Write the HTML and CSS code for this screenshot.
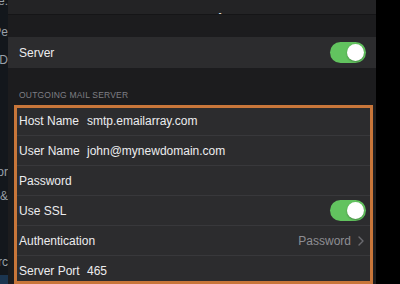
FILE: index.html
```html
<!DOCTYPE html>
<html>
<head>
<meta charset="utf-8">
<link rel="stylesheet" href="styles.css">
</head>
<body>
<div class="screen">
  <div class="behind">
    <div class="frag f1">Name:</div>
    <div class="frag f2">Pe</div>
    <div class="frag f3">ID</div>
    <div class="frag f4">or</div>
    <div class="frag f5">&amp;</div>
    <div class="frag f6">erc</div>
    <div class="bluebar"></div>
  </div>
  <div class="sheet">
    <div class="topbar"><span class="title">SMTP · Settings</span></div>
    <div class="spacer"></div>
    <div class="row solo">
      <span class="label">Server</span>
      <span class="toggle"><span class="knob"></span></span>
    </div>
    <div class="section-head">OUTGOING MAIL SERVER</div>
    <div class="box">
      <div class="row r-first"><span class="label">Host Name</span><span class="value">smtp.emailarray.com</span></div>
      <div class="row"><span class="label">User Name</span><span class="value">john@mynewdomain.com</span></div>
      <div class="row"><span class="label">Password</span></div>
      <div class="row"><span class="label">Use SSL</span><span class="toggle"><span class="knob"></span></span></div>
      <div class="row"><span class="label">Authentication</span><span class="detail">Password<svg class="chev" width="6" height="10" viewBox="0 0 6 10"><path d="M1 1l4 4-4 4" fill="none" stroke="#6b6b70" stroke-width="1.4" stroke-linecap="round" stroke-linejoin="round"/></svg></span></div>
      <div class="row r-last"><span class="label">Server Port</span><span class="value">465</span></div>
    </div>
  </div>
  <div class="right"></div>
</div>
</body>
</html>
```
FILE: styles.css
```css
html, body {
  margin: 0;
  padding: 0;
  background: #000;
}
.screen {
  width: 400px;
  height: 284px;
  display: flex;
  overflow: hidden;
  font-family: "Liberation Sans", Arial, sans-serif;
  color: #ececee;
}
.behind {
  width: 8px;
  flex: none;
  background: #13171c;
  position: relative;
  overflow: hidden;
}
.frag {
  position: absolute;
  right: 0;
  font-size: 12px;
  color: #9aa0a8;
  white-space: nowrap;
}
.f1 { top: -6px; }
.f2 { top: 25px; }
.f3 { top: 53px; }
.f4 { top: 165px; }
.f5 { top: 189px; }
.f6 { top: 255px; }
.bluebar {
  position: absolute;
  left: 0;
  right: 0;
  bottom: 0;
  height: 9px;
  background: #1b3550;
}
.sheet {
  width: 368px;
  flex: none;
  background: #1c1c1e;
  display: flex;
  flex-direction: column;
}
.right {
  flex: 1;
  background: #000;
}
.topbar {
  height: 14px;
  background: #232325;
  border-bottom: 1px solid #151517;
  overflow: hidden;
  display: flex;
  justify-content: center;
  align-items: flex-end;
}
.title {
  font-size: 15px;
  font-weight: bold;
  color: #d8d8dc;
  margin-bottom: -12px;
  line-height: 15px;
}
.spacer {
  height: 22px;
}
.row {
  height: 30px;
  background: #2c2c2e;
  display: flex;
  align-items: center;
  padding: 0 4px 0 3px;
  border-top: 1px solid #38383b;
  box-sizing: border-box;
  font-size: 12px;
}
.row.solo {
  height: 31px;
  border-top: none;
  padding-left: 11px;
  padding-right: 10px;
}
.label {
  width: 68px;
  flex: none;
  white-space: nowrap;
}
.value {
  flex: 1;
  white-space: nowrap;
}
.toggle {
  margin-left: auto;
  width: 36px;
  height: 21px;
  border-radius: 11px;
  background: #62c35f;
  display: flex;
  align-items: center;
  justify-content: flex-end;
  padding: 0 2px;
  box-sizing: border-box;
}
.knob {
  width: 17px;
  height: 17px;
  border-radius: 50%;
  background: #fff;
  box-shadow: 0 1px 2px rgba(0,0,0,.3);
}
.section-head {
  height: 37px;
  box-sizing: border-box;
  padding: 22px 0 0 11px;
  font-size: 8.5px;
  letter-spacing: 0.2px;
  color: #7f7f84;
}
.box {
  margin-left: 6px;
  width: 359px;
  box-sizing: border-box;
  border: 3px solid #c8763a;
  display: flex;
  flex-direction: column;
}
.box .row {
  padding-left: 2px;
}
.box .row.r-first {
  height: 27px;
  border-top: none;
  padding-bottom: 1px;
}
.box .row.r-last {
  height: 26px;
  padding-top: 4px;
}
.detail {
  margin-left: auto;
  margin-right: 2px;
  color: #8e8e93;
  display: flex;
  align-items: center;
  gap: 7px;
}
.chev {
  display: block;
}
```
